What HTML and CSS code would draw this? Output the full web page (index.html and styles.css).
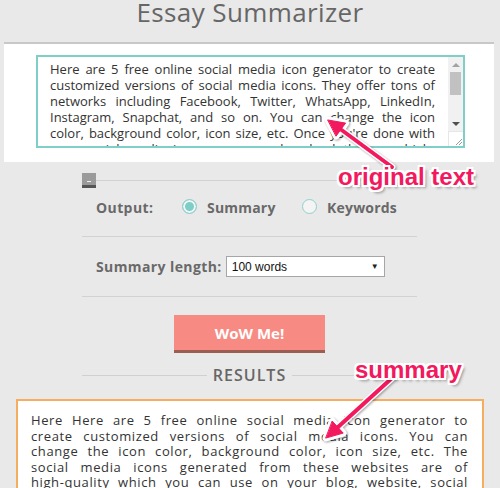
FILE: index.html
```html
<!DOCTYPE html>
<html>
<head>
<meta charset="utf-8">
<link rel="stylesheet" href="styles.css">
</head>
<body>
<div class="page">
  <h1 class="title">Essay Summarizer</h1>
  <div class="input-panel">
    <div class="textbox">
      <div class="textbox-text">
        <span class="line">Here are 5 free online social media icon generator to create</span>
        <span class="line">customized versions of social media icons. They offer tons of</span>
        <span class="line">networks including Facebook, Twitter, WhatsApp, LinkedIn,</span>
        <span class="line">Instagram, Snapchat, and so on. You can change the icon</span>
        <span class="line">color, background color, icon size, etc. Once you're done with</span>
        <span class="line">your social media icons, you can download them as high-quality</span>
      </div>
      <div class="scrollbar">
        <div class="sb-btn"><span class="tri-up"></span></div>
        <div class="sb-track"><div class="sb-thumb"></div></div>
        <div class="sb-btn"><span class="tri-down"></span></div>
        <div class="sb-corner">
          <svg width="15" height="15" viewBox="0 0 15 15"><path d="M13 7 L7 13 M13 10 L10 13" stroke="#9a9a9a" stroke-width="1"/></svg>
        </div>
      </div>
    </div>
  </div>

  <div class="controls">
    <div class="toggle-row">
      <span class="toggle"><span class="toggle-dash"></span></span>
      <span class="toggle-line"></span>
    </div>
    <div class="row output-row">
      <span class="label label-output">Output:</span>
      <span class="radio-opt opt-summary"><span class="radio checked"></span>Summary</span>
      <span class="radio-opt"><span class="radio"></span>Keywords</span>
    </div>
    <div class="row length-row">
      <span class="label">Summary length:</span>
      <div class="select"><span>100 words</span><span class="caret">&#9660;</span></div>
    </div>
    <div class="btn-row"><button class="wow">WoW Me!</button></div>
    <div class="results-head"><span class="rule"></span><span class="results-title">RESULTS</span><span class="rule"></span></div>
  </div>

  <div class="results">
    <span class="line">Here Here are 5 free online social media icon generator to</span>
    <span class="line">create customized versions of social media icons. You can</span>
    <span class="line">change the icon color, background color, icon size, etc. The</span>
    <span class="line">social media icons generated from these websites are of</span>
    <span class="line">high-quality which you can use on your blog, website, social</span>
    <span class="line">media profiles, and more. You can also download the icons</span>
  </div>

  <svg class="arrows" width="500" height="488" viewBox="0 0 500 488">
    <g fill="#ffffff" stroke="#ffffff" stroke-width="7" stroke-linejoin="round" stroke-linecap="round">
      <path d="M392 167 L340.9 129.5"/>
      <polygon points="328,120 345.6,123.1 336.2,135.9"/>
      <path d="M392 378 L337.8 427.2"/>
      <polygon points="326,438 343.2,433.1 332.4,421.3"/>
    </g>
    <g fill="#f2195e" stroke="#f2195e" stroke-width="4" stroke-linejoin="round" stroke-linecap="round">
      <path d="M392 167 L340.9 129.5"/>
      <polygon points="328,120 345.6,123.1 336.2,135.9" stroke-width="1"/>
      <path d="M392 378 L337.8 427.2"/>
      <polygon points="326,438 343.2,433.1 332.4,421.3" stroke-width="1"/>
    </g>
  </svg>
  <div class="annot annot-orig">original text</div>
  <div class="annot annot-sum">summary</div>
</div>
</body>
</html>
```

FILE: styles.css
```css
body {
  margin: 0;
  background: #e9e9e9;
  font-family: "Open Sans", "DejaVu Sans", sans-serif;
}

.page {
  position: relative;
  width: 500px;
  height: 488px;
  overflow: hidden;
}

.title {
  margin: 0;
  height: 42px;
  text-align: center;
  font-weight: 400;
  font-size: 26px;
  line-height: 30px;
  letter-spacing: 0.4px;
  color: #666666;
  margin-top: -3px;
  padding-bottom: 3px;
  box-sizing: border-box;
  height: 45px;
}

.input-panel {
  margin: 0 6px 0 4px;
  background: #ffffff;
  border-top: 2px solid #c8c8c8;
  padding: 11px 0 14px 32px;
}

.textbox {
  width: 429px;
  height: 93px;
  box-sizing: border-box;
  border: 2px solid #80cec8;
  display: flex;
  background: #ffffff;
}

.textbox-text {
  flex: 1;
  overflow: hidden;
  padding: 4px 13px 0 12px;
  font-size: 13px;
  line-height: 16px;
  color: #333333;
}

.line {
  display: block;
  text-align: justify;
  text-align-last: justify;
}

.scrollbar {
  width: 15px;
  display: flex;
  flex-direction: column;
  background: #f1f1f1;
}

.sb-btn {
  height: 15px;
  display: flex;
  align-items: center;
  justify-content: center;
}

.tri-up {
  width: 0;
  height: 0;
  border-left: 4px solid transparent;
  border-right: 4px solid transparent;
  border-bottom: 4px solid #a3a3a3;
}

.tri-down {
  width: 0;
  height: 0;
  border-left: 4px solid transparent;
  border-right: 4px solid transparent;
  border-top: 4px solid #505050;
}

.sb-track {
  flex: 1;
  padding: 0 2px;
}

.sb-thumb {
  height: 23px;
  background: #c1c1c1;
}

.sb-corner {
  height: 15px;
  background: #ffffff;
  border-top: 1px solid #e6e6e6;
  border-left: 1px solid #e6e6e6;
  box-sizing: border-box;
}

.sb-corner svg {
  display: block;
}

.controls {
  margin: 11px 0 0 82px;
  width: 335px;
}

.toggle-row {
  display: flex;
  align-items: center;
  height: 15px;
}

.toggle {
  width: 14px;
  height: 15px;
  box-sizing: border-box;
  background: #9b9b9b;
  border-bottom: 3px solid #565656;
  display: flex;
  justify-content: center;
  align-items: flex-end;
  padding-bottom: 3px;
}

.toggle-dash {
  width: 4px;
  height: 1px;
  background: #f0f0f0;
}

.toggle-line {
  flex: 1;
  height: 1px;
  background: #d2d2d2;
}

.row {
  display: flex;
  align-items: center;
  padding-left: 14px;
  border-bottom: 1px solid #d2d2d2;
}

.output-row {
  height: 20px;
  padding-top: 9px;
  padding-bottom: 19px;
}

.length-row {
  height: 21px;
  padding-top: 19px;
  padding-bottom: 19px;
}

.label,
.radio-opt {
  font-size: 14px;
  font-weight: 700;
  color: #696969;
  letter-spacing: 0.4px;
}

.label-output {
  width: 86px;
}

.radio-opt {
  display: flex;
  align-items: center;
  gap: 10px;
  letter-spacing: 0.2px;
}

.opt-summary {
  width: 120px;
}

.radio {
  width: 15px;
  height: 15px;
  box-sizing: border-box;
  border-radius: 50%;
  border: 1px solid #8ed1cc;
  background: #f4f4f4;
  margin-top: -2px;
}

.radio.checked {
  background: #7dcec7;
  box-shadow: inset 0 0 0 2px #f4f4f4;
}

.select {
  margin-left: 4px;
  width: 159px;
  height: 21px;
  box-sizing: border-box;
  border: 1px solid #a6a6a6;
  background: #ffffff;
  display: flex;
  align-items: center;
  justify-content: space-between;
  padding: 0 5px 0 5px;
  font-family: "Liberation Sans", Arial, sans-serif;
  font-size: 12px;
  color: #111111;
}

.caret {
  font-size: 8px;
  color: #222222;
}

.btn-row {
  display: flex;
  justify-content: center;
  padding-top: 18px;
}

.wow {
  width: 151px;
  height: 38px;
  border: none;
  border-bottom: 3px solid #9c5d53;
  background: #f78a82;
  color: #ffffff;
  font-family: "Open Sans", "DejaVu Sans", sans-serif;
  font-weight: 700;
  font-size: 15px;
  padding: 0;
}

.results-head {
  margin-top: 12px;
  height: 20px;
  display: flex;
  align-items: center;
  gap: 6px;
}

.rule {
  flex: 1;
  height: 1px;
  background: #d0d0d0;
}

.results-title {
  font-size: 16px;
  font-weight: 600;
  letter-spacing: 1px;
  color: #666666;
}

.results {
  margin: 14px 16px 0 16px;
  height: 120px;
  border: 2px solid #f5ad5f;
  background: #ffffff;
  padding: 12px 14px 0 13px;
  font-size: 13px;
  line-height: 15.5px;
  letter-spacing: 0.6px;
  color: #333333;
  overflow: hidden;
}

.arrows {
  position: absolute;
  left: 0;
  top: 0;
  filter: drop-shadow(1px 1px 1px rgba(0, 0, 0, 0.35));
}

.annot {
  position: absolute;
  font-family: "Liberation Sans", Arial, sans-serif;
  font-weight: 700;
  font-size: 24px;
  line-height: 24px;
  color: #f2195e;
  text-shadow:
    -2px 0 0 #fff, 2px 0 0 #fff, 0 -2px 0 #fff, 0 2px 0 #fff,
    -2px -2px 0 #fff, 2px -2px 0 #fff, -2px 2px 0 #fff, 2px 2px 0 #fff,
    3px 3px 3px rgba(0, 0, 0, 0.4);
}

.annot-orig {
  left: 338px;
  top: 165px;
}

.annot-sum {
  left: 355px;
  top: 358px;
}
```
